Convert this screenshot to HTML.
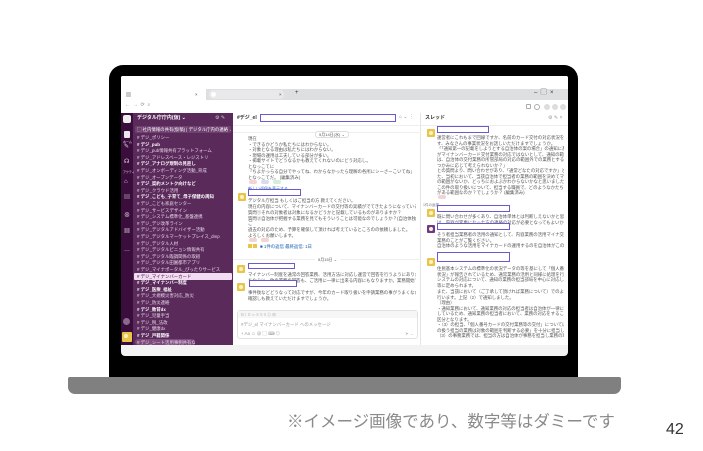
<!DOCTYPE html>
<html><head><meta charset="utf-8">
<style>
*{margin:0;padding:0;box-sizing:border-box}
body{width:703px;height:451px;background:#fff;position:relative;overflow:hidden;font-family:"Liberation Sans","Noto Sans CJK JP",sans-serif}
.a{position:absolute}
.t{position:absolute;font-size:4.4px;line-height:5px;white-space:nowrap;color:#555}
.m{width:168px;overflow:hidden}
.h{width:127px;overflow:hidden}
.si{position:absolute;left:137px;font-size:4.4px;line-height:6px;white-space:nowrap;color:#e6d6e6;width:94px;overflow:hidden}
.si.b{color:#fff;font-weight:bold}
.av{position:absolute;width:8px;height:8px;background:#e8c54a;border-radius:1px}
.av::after{content:"";position:absolute;left:2px;top:1.5px;width:4px;height:4px;border-radius:50%;background:#fff3c0}
.nb{position:absolute;height:7px;border:1px solid #6a5ad0;background:#fff}
</style></head><body>
<!-- laptop -->
<div class="a" style="left:109px;top:65px;width:469px;height:313px;background:#000;border-radius:14px 14px 0 0"></div>
<div class="a" style="left:68px;top:377px;width:553px;height:17px;background:#808080;border-radius:2px 2px 7px 7px"></div>
<div class="a" style="left:121px;top:76px;width:447px;height:280px;background:#f3f3f3;border-radius:2px 2px 4px 4px;overflow:hidden">
  <div class="a" style="left:0;top:0;width:447px;height:13px;background:#fff"></div>
  <div class="a" style="left:0;top:13px;width:447px;height:11px;background:#dedfe1"></div>
  <div class="a" style="left:0;top:13px;width:85px;height:11px;background:#fff"></div>
  <div class="t" style="left:74px;top:16px;color:#555">×</div>
  <div class="a" style="left:5px;top:16px;width:5px;height:5px;background:#ccc"></div>
  <div class="a" style="left:88px;top:14px;width:75px;height:9px;background:#e9e9eb;border-radius:4px"></div>
  <div class="a" style="left:90px;top:16px;width:5px;height:5px;border-radius:50%;background:#fff"></div>
  <div class="t" style="left:158px;top:16px;color:#555">×</div>
  <div class="t" style="left:174px;top:15px;font-size:6px;color:#333">+</div>
  <div class="t" style="left:413px;top:15px;font-size:6px;color:#333">–&nbsp;&nbsp;▢&nbsp;&nbsp;×</div>
  <div class="a" style="left:0;top:24px;width:447px;height:13px;background:#fff"></div>
  <div class="t" style="left:4px;top:27px;color:#888;font-size:5px">←&nbsp;&nbsp;→&nbsp;&nbsp;⟳&nbsp;&nbsp;⌕</div>
  <div class="a" style="left:405px;top:28px;width:5px;height:5px;border:1px solid #aaa;border-radius:1px"></div>
  <div class="a" style="left:413px;top:28px;width:6px;height:6px;border:1px solid #aaa;border-radius:50%"></div>
  <div class="a" style="left:423px;top:28px;width:6px;height:6px;background:#ddd;border-radius:50%"></div>
  <div class="a" style="left:431px;top:28px;width:6px;height:6px;background:#ddd;border-radius:50%"></div>
  <div class="a" style="left:439px;top:28px;width:6px;height:6px;background:#ddd;border-radius:50%"></div>
  <div class="a" style="left:0;top:37px;width:12px;height:232px;background:#3b0d3c"></div>
  <div class="a" style="left:12px;top:37px;width:100px;height:232px;background:#5a2a5b"></div>
  <div class="a" style="left:112px;top:37px;width:187px;height:232px;background:#fff"></div>
  <div class="a" style="left:299px;top:37px;width:148px;height:232px;background:#fff;border-left:1px solid #e4e4e4"></div>
</div>
<!-- icon rail -->
<div class="a" style="left:123px;top:115px;width:8px;height:8px;background:#eee;border-radius:2px"></div>
<div class="a" style="left:124px;top:131px;width:6px;height:7px;background:#fff;border-radius:1px;opacity:.9"></div>
<div class="t" style="left:123px;top:140px;color:#fff;font-size:3px">ホーム</div>
<div class="t" style="left:124px;top:145px;color:#ddd;font-size:6px">✎</div>
<div class="t" style="left:124px;top:160px;color:#ddd;font-size:6px">☊</div>
<div class="t" style="left:123px;top:170px;color:#ddd;font-size:3px">アクティ</div>
<div class="t" style="left:124px;top:180px;color:#ddd;font-size:6px">⌂</div>
<div class="t" style="left:124px;top:196px;color:#ddd;font-size:6px">▤</div>
<div class="t" style="left:124px;top:214px;color:#ddd;font-size:6px">⊗</div>
<div class="t" style="left:124px;top:230px;color:#ddd;font-size:6px">▦</div>
<div class="t" style="left:124px;top:248px;color:#ddd;font-size:6px">…</div>
<div class="a" style="left:123px;top:318px;width:7px;height:7px;border-radius:50%;background:#8a6a8a"></div>
<div class="av" style="left:122px;top:332px;width:10px;height:10px"></div>
<!-- sidebar -->
<div class="t" style="left:137px;top:116px;color:#fff;font-weight:bold;font-size:5px">デジタル庁庁内(仮) ⌄</div>
<div class="t" style="left:215px;top:116px;color:#ccc;font-size:5px">⚙ ✎</div>
<div class="a" style="left:135px;top:126px;width:96px;height:7px;background:#6e3f6f;border-radius:1px"></div>
<div class="si" style="top:126.5px;color:#fff">▢ 社内情報の共有(仮稿) | デジタル庁内の連絡 ⌄</div>
<div class="si" style="top:135px"># デジ_ポリシー</div>
<div class="si b" style="top:141.6px"># デジ_pub</div>
<div class="si" style="top:148.2px"># デジ_pub情報共有プラットフォーム</div>
<div class="si" style="top:154.8px"># デジ_アドレスベース・レジストリ</div>
<div class="si b" style="top:161.4px"># デジ_アナログ規制の見直し</div>
<div class="si" style="top:168px"># デジ_オンボーディング活動_育成</div>
<div class="si" style="top:174.6px"># デジ_オープンデータ</div>
<div class="si b" style="top:181.2px"># デジ_契約メントク向けなど</div>
<div class="si" style="top:187.8px"># デジ_クラウド活用</div>
<div class="si b" style="top:194.4px"># デジ_こども_子育て_母子保健の周知</div>
<div class="si" style="top:201px"># デジ_こども家庭センター</div>
<div class="si" style="top:207.6px"># デジ_サービスデザイン</div>
<div class="si" style="top:214.2px"># デジ_システム標準化_基盤連携</div>
<div class="si" style="top:220.8px"># デジ_デジ改革ライン</div>
<div class="si" style="top:227.4px"># デジ_デジタルアドバイザー活動</div>
<div class="si" style="top:234px"># デジ_デジタルマーケットプレイス_dmp</div>
<div class="si" style="top:240.6px"># デジ_デジタル人材</div>
<div class="si" style="top:247.2px"># デジ_デジタルピニョン情報共有</div>
<div class="si" style="top:253.8px"># デジ_デジタル臨調関係の取組</div>
<div class="si" style="top:260.4px"># デジ_デジタル田園都市アプリ</div>
<div class="si" style="top:267px"># デジ_マイナポータル_ぴったりサービス</div>
<div class="a" style="left:134px;top:273px;width:98px;height:6.5px;background:#f2dcf2;border-radius:1px"></div>
<div class="si" style="top:273.6px;color:#3a0f3b"># デジ_マイナンバーカード</div>
<div class="si b" style="top:280.2px"># デジ_マイナンバー制度</div>
<div class="si b" style="top:286.8px"># デジ_医療_福祉</div>
<div class="si" style="top:293.4px"># デジ_大規模災害対応_防災</div>
<div class="si" style="top:300px"># デジ_防災連絡</div>
<div class="si b" style="top:306.6px"># デジ_教育dx</div>
<div class="si" style="top:313.2px"># デジ_児童手当</div>
<div class="si" style="top:319.8px"># デジ_税_法改</div>
<div class="si" style="top:326.4px"># デジ_健康dx</div>
<div class="si b" style="top:333px"># デジ_戸籍関係</div>
<div class="a" style="left:135px;top:339px;width:60px;height:6px;background:#7d4a7e;border-radius:3px"></div>
<div class="si" style="top:339.6px;width:58px"># デジ_シート活用事例共有など</div>
<!-- main header -->
<div class="t" style="left:237px;top:116px;font-weight:bold;font-size:5px;color:#333">#デジ_el</div>
<div class="nb" style="left:260px;top:114px;width:136px;height:8px"></div>
<div class="t" style="left:399px;top:115px;color:#888;font-size:5px">⌂ ⌄ ⋮</div>
<div class="a" style="left:233px;top:125px;width:188px;height:1px;background:#eee"></div>
<div class="a" style="left:233px;top:132px;width:188px;height:1px;background:#eee"></div>
<div class="t" style="left:315px;top:131px;background:#fff;padding:0 3px;border:1px solid #ddd;border-radius:3px;font-size:4px">5月14日(水) ⌄</div>
<div class="t m" style="left:248px;top:136px">現在</div>
<div class="t m" style="left:248px;top:141.5px">・できるかどうか私たちにはわからない。</div>
<div class="t m" style="left:248px;top:147px">・対象となる理由は私たちにはわからない。</div>
<div class="t m" style="left:248px;top:152.5px">・現場の運用は工夫している部分が多い。</div>
<div class="t m" style="left:248px;top:158px">・掲載サイトでどうなるかも教えてくれないのにどう対応し。</div>
<div class="t m" style="left:248px;top:163.5px">となっこてに</div>
<div class="t m" style="left:248px;top:169px">「ちよかっらる自分でやってね、わからなかったら理解の各所にシーさーこいてね」</div>
<div class="t m" style="left:248px;top:174.5px">となっこてだ。 (編集済み)</div>
<div class="a" style="left:249px;top:180px;width:8px;height:4px;background:#f3d3d3;border-radius:2px"></div>
<div class="a" style="left:261px;top:180px;width:8px;height:4px;background:#d7dcf3;border-radius:2px"></div>
<div class="a" style="left:273px;top:180px;width:8px;height:4px;background:#d3efd7;border-radius:2px"></div>
<div class="t" style="left:248px;top:186px;color:#1a5fb4;font-size:4px">新しい返信を表示する</div>
<div class="av" style="left:238px;top:193px"></div>
<div class="nb" style="left:248px;top:189px;width:53px;height:7px"></div>
<div class="t m" style="left:248px;top:198px">デジタル庁担当 もしくはご担当の方 教えてください。</div>
<div class="t m" style="left:248px;top:203.5px">現在の内容について、マイナンバーカードの交付等の実績がでてきたようになっていると思います。</div>
<div class="t m" style="left:248px;top:210px">質問①それの対象者は対象になるかどうかと記載しているものがありますか？</div>
<div class="t m" style="left:248px;top:215.5px">質問②自治体が把握する業務を見てもそういうことは可能なのでしょうか？(自治体独自の運用にかかると)</div>
<div class="t m" style="left:248px;top:221px">ご</div>
<div class="t m" style="left:248px;top:227px">過去の対応のため、予算を確保して頂ければ考えているところのの依頼しました。</div>
<div class="t m" style="left:248px;top:232.5px">よろしくお願いします。</div>
<div class="a" style="left:249px;top:238px;width:8px;height:4px;background:#f3d3d3;border-radius:2px"></div>
<div class="a" style="left:261px;top:238px;width:8px;height:4px;background:#f3d3d3;border-radius:2px"></div>
<div class="a" style="left:248px;top:244px;width:4px;height:4px;background:#e8c54a"></div>
<div class="a" style="left:253px;top:244px;width:4px;height:4px;background:#e8c54a"></div>
<div class="t" style="left:260px;top:243.5px;color:#1a5fb4">■ 1件の返信 最終返信: 1日</div>
<div class="a" style="left:233px;top:259px;width:188px;height:1px;background:#eee"></div>
<div class="t" style="left:315px;top:257px;background:#fff;padding:0 3px;font-size:4px">5月15日 ⌄</div>
<div class="av" style="left:237px;top:265px"></div>
<div class="nb" style="left:248px;top:263px;width:47px;height:6px"></div>
<div class="t m" style="left:248px;top:272px">マイナンバー制度を通常の回答業務、活用方法に対応し運営で回答を行うようにありがたい。</div>
<div class="t m" style="left:248px;top:277.5px">ちなみに、他の業務の回答も、ご活用に一律に出来る内容にもなりますか。業務開始です。</div>
<div class="av" style="left:237px;top:283px"></div>
<div class="nb" style="left:249px;top:280px;width:48px;height:7px"></div>
<div class="t m" style="left:248px;top:290px">事件後などどうなって対応ですが、今年のカード取り扱いを申請業務の事がうまくなかったのか</div>
<div class="t m" style="left:248px;top:295.5px">確認しも教えていただけますでしょうか。</div>
<div class="a" style="left:237px;top:310px;width:181px;height:29px;border:1px solid #e2e2e2;border-radius:3px;background:#fff"></div>
<div class="a" style="left:238px;top:311px;width:179px;height:7px;background:#f6f6f6"></div>
<div class="t" style="left:241px;top:312px;color:#bbb">B I S ∞ ≡ ≡ ≡ ⟨⟩ ⊞</div>
<div class="t" style="left:241px;top:322px;color:#999">#デジ_el マイナンバーカード へのメッセージ</div>
<div class="t" style="left:241px;top:331px;color:#999">+ Aa ☺ @ ▢ ⌨ ◎</div>
<div class="t" style="left:405px;top:331px;color:#bbb">➤ ⌄</div>
<!-- thread -->
<div class="t" style="left:425px;top:116px;font-weight:bold;font-size:5px;color:#333">スレッド</div>
<div class="t" style="left:548px;top:116px;color:#999;font-size:5px">⚙ ✎ ×</div>
<div class="a" style="left:421px;top:125px;width:147px;height:1px;background:#eee"></div>
<div class="av" style="left:427px;top:129px"></div>
<div class="nb" style="left:437px;top:126px;width:52px;height:7px"></div>
<div class="t h" style="left:437px;top:135px">運営者にこれもまで回線ですか、名前のカード交付の対応状況を詳しく体しわかりますか。</div>
<div class="t h" style="left:437px;top:140.5px">す、みなさんの事業状況をお話しいただけますでしょうか。</div>
<div class="t h" style="left:437px;top:146px">「「通知第一の記載をしようとする自治体の案の場合」の通知に基づく業務の改善の取り扱い</div>
<div class="t h" style="left:437px;top:151.5px">がマイナンバーカード交付業務の対応ではないとして、通知の範囲外</div>
<div class="t h" style="left:437px;top:157px">は、自治体の交付業務の所管部局の対応の範囲外での業務とするかは業務の担当の方の</div>
<div class="t h" style="left:437px;top:162.5px">つかみに応じて考えられないか？」</div>
<div class="t h" style="left:437px;top:168px">との質問より、問い合わせがあり、「通常どなたの対応ですか」と言うもありまし</div>
<div class="t h" style="left:437px;top:173.5px">た、当初において、当該自治体で担当者の業務の範囲を決めてマイナンバーカードの担当</div>
<div class="t h" style="left:437px;top:179px">の範囲がないか、どっちにおよぶかわからないかなと思いました。</div>
<div class="t h" style="left:437px;top:184.5px">この件の取り扱いについて、担当する職員で、どのようなかたちか、何を知り</div>
<div class="t h" style="left:437px;top:190px">がある範囲なのか？でしょうか？ (編集済み)</div>
<div class="a" style="left:438px;top:195px;width:8px;height:4px;background:#f3d3d3;border-radius:2px"></div>
<div class="t" style="left:423px;top:203px;color:#777;font-size:3.5px">1件の返信</div>
<div class="av" style="left:427px;top:209px"></div>
<div class="nb" style="left:437px;top:205px;width:73px;height:7px"></div>
<div class="t h" style="left:437px;top:214px">既に問い合わせが多くあり、自治体単体とは判断しえないかと思います。ご対応ください</div>
<div class="t h" style="left:437px;top:219.5px">は、内容が変更になった方の連絡の対応が必要となってもよいかと思います。</div>
<div class="av" style="left:427px;top:225px;background:#6b3a8c"></div>
<div class="nb" style="left:437px;top:223px;width:73px;height:7px"></div>
<div class="t h" style="left:437px;top:232px">そう者担当業務者の活用の通知として、内容業務の活用マイナ交付アプリケーションの活用</div>
<div class="t h" style="left:437px;top:237.5px">業務のことがご覧ください。</div>
<div class="t h" style="left:437px;top:243px">自治体のような活用をマイナカードの運用するのを自治体がこのなるか</div>
<div class="av" style="left:427px;top:258px"></div>
<div class="nb" style="left:437px;top:252px;width:73px;height:10px"></div>
<div class="t h" style="left:437px;top:266px">住民基本システムの標準化の状況データの等を基にして「個人番号カードの事務</div>
<div class="t h" style="left:437px;top:271.5px">状況」が報告されているため、通常業務の活用と同様に処理を行う自治体業務の</div>
<div class="t h" style="left:437px;top:277px">システムの対応について、通知の業務の担当部局を中心に対応していただくこと</div>
<div class="t h" style="left:437px;top:282.5px">等に定められます。</div>
<div class="t h" style="left:437px;top:289px">また、当該において（ご了承して頂ければ業務について）でのように対応</div>
<div class="t h" style="left:437px;top:294.5px">行います。上記（2）で通知しました。</div>
<div class="t h" style="left:437px;top:300px">（理由）</div>
<div class="t h" style="left:437px;top:305.5px">・通知業務において、通知業務の対応の担当者は自治体が一律に対応</div>
<div class="t h" style="left:437px;top:311px">しているため、通知業務の担当者において、業務の対応をすることが前提</div>
<div class="t h" style="left:437px;top:316.5px">区分となります。</div>
<div class="t h" style="left:437px;top:322px">・（3）の担当、「個人番号カードの交付業務等の交付」については、自治</div>
<div class="t h" style="left:437px;top:327.5px">の扱う担当の業務は対象の範囲を判断する必要」を十分に担当していることなど。</div>
<div class="t h" style="left:437px;top:333px">（3）の事務業務では、担当の方は自治体が事務を担当し業務の取り扱い</div>
<!-- caption -->
<div class="t" style="left:287px;top:412px;font-size:16.5px;line-height:20px;color:#8a8a8a">※イメージ画像であり、数字等はダミーです</div>
<div class="t" style="left:666px;top:421px;font-size:16px;line-height:18px;color:#333">42</div>
</body></html>
